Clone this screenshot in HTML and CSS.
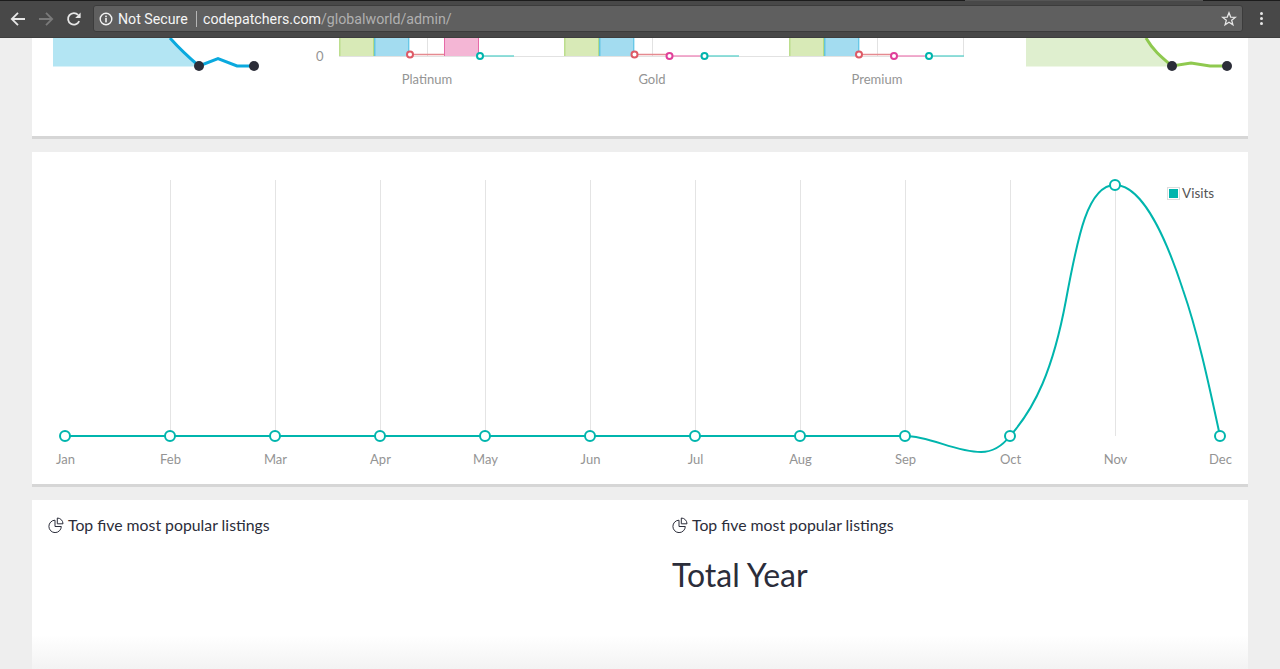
FILE: index.html
```html
<!DOCTYPE html>
<html lang="en">
<head>
    <meta charset="UTF-8">
    <title>Admin dashboard</title>
    <link rel="stylesheet" href="styles.css">
</head>
<body>
    <header class="toolbar">
        <svg class="nav-icon" viewBox="0 0 16 16"><path d="M15 8H2M8 1.800L1.800 8L8 14.200" fill="none" stroke="#e6e6e6" stroke-width="1.8"/></svg>
        <svg class="nav-icon" viewBox="0 0 16 16"><path d="M1 8H14M8 1.800L14.200 8L8 14.200" fill="none" stroke="#7a7a7a" stroke-width="1.8"/></svg>
        <svg class="nav-icon" viewBox="0 0 16 16"><path d="M13.200 10.200A5.800 5.800 0 1 1 12.200 4" fill="none" stroke="#e6e6e6" stroke-width="1.8"/><path d="M14.600 1.600V7H9.200Z" fill="#e6e6e6"/></svg>
        <div class="omnibox">
            <svg class="info-icon" viewBox="0 0 14 14"><circle cx="7" cy="7" r="5.8" fill="none" stroke="#f2f2f2" stroke-width="1.4"/><rect x="6.200" y="6" width="1.600" height="4.400" fill="#f2f2f2"/><rect x="6.200" y="3.600" width="1.600" height="1.600" fill="#f2f2f2"/></svg>
            <span class="secure">Not Secure</span>
            <span class="divider"></span>
            <span class="url">codepatchers.com<span class="url-path">/globalworld/admin/</span></span>
            <svg class="star-icon" viewBox="0 0 16 16"><path d="M8 1.800L9.700 6.100L14.300 6.400L10.700 9.300L11.900 13.800L8 11.300L4.100 13.800L5.300 9.300L1.700 6.400L6.300 6.100Z" fill="none" stroke="#e6e6e6" stroke-width="1.3"/></svg>
        </div>
        <div class="menu-dots"><i></i><i></i><i></i></div>
    </header>

    <main class="page">
        <section class="card card-stats">
            <svg class="chart" viewBox="32 38 1216 98">
                <!-- left sparkline -->
                <path d="M53 38H170L199 66.500H53Z" fill="#b3e5f3"/>
                <path d="M170 38C178 47 186 55 199 66L218 58.500L237 66H254" fill="none" stroke="#0aa9de" stroke-width="3"/>
                <circle cx="199" cy="66" r="5" fill="#2b2d38"/>
                <circle cx="254" cy="66" r="5" fill="#2b2d38"/>

                <!-- bar chart grid -->
                <path d="M427.500 38V56M652.500 38V56M877.500 38V56M963.500 38V56" stroke="#e2e2e2"/>
                <path d="M339 56.500H964" stroke="#e2e2e2"/>
                <text class="axis" x="316" y="61">0</text>

                <!-- Platinum -->
                <rect class="bar-green" x="339.500" y="38" width="34.500" height="18"/>
                <rect class="bar-blue" x="374.500" y="38" width="34" height="18"/>
                <path class="edge-green" d="M339.800 38V56M373.800 38V56"/>
                <path class="edge-blue" d="M374.800 38V56M408.800 38V56"/>
                <rect class="bar-pink" x="444.500" y="38" width="34" height="18"/>
                <path class="edge-pink" d="M444.500 38V56M478.500 38V56"/>
                <path class="line-red" d="M410 54.500H444"/>
                <path class="line-teal" d="M480 56H514"/>
                <circle class="dot-red" cx="410" cy="54.500" r="3"/>
                <circle class="dot-teal" cx="480" cy="56" r="3"/>
                <text class="axis" x="427" y="84" text-anchor="middle">Platinum</text>

                <!-- Gold -->
                <rect class="bar-green" x="564.500" y="38" width="34.500" height="18"/>
                <rect class="bar-blue" x="599.500" y="38" width="34" height="18"/>
                <path class="edge-green" d="M564.800 38V56M598.800 38V56"/>
                <path class="edge-blue" d="M599.800 38V56M633.800 38V56"/>
                <path class="line-red" d="M635 54.500H669"/>
                <path class="line-pink" d="M670 56H704"/>
                <path class="line-teal" d="M705 56H739"/>
                <circle class="dot-red" cx="634.500" cy="54.500" r="3"/>
                <circle class="dot-pink" cx="669.500" cy="56" r="3"/>
                <circle class="dot-teal" cx="704.500" cy="56" r="3"/>
                <text class="axis" x="652" y="84" text-anchor="middle">Gold</text>

                <!-- Premium -->
                <rect class="bar-green" x="789.500" y="38" width="34.500" height="18"/>
                <rect class="bar-blue" x="824.500" y="38" width="34" height="18"/>
                <path class="edge-green" d="M789.800 38V56M823.800 38V56"/>
                <path class="edge-blue" d="M824.800 38V56M858.800 38V56"/>
                <path class="line-red" d="M859 54.500H894"/>
                <path class="line-pink" d="M894 56H929"/>
                <path class="line-teal" d="M929 56H964"/>
                <circle class="dot-red" cx="859" cy="54.500" r="3"/>
                <circle class="dot-pink" cx="894" cy="56" r="3"/>
                <circle class="dot-teal" cx="929" cy="56" r="3"/>
                <text class="axis" x="877" y="84" text-anchor="middle">Premium</text>

                <!-- right sparkline -->
                <path d="M1026 38H1146C1153 50 1160 56 1172 66.500H1026Z" fill="#dfefcf"/>
                <path d="M1146 38C1153 50 1160 56 1172 66L1191 63L1210 66H1227" fill="none" stroke="#8fc94f" stroke-width="3"/>
                <circle cx="1172" cy="66" r="5" fill="#2b2d38"/>
                <circle cx="1227" cy="66" r="5" fill="#2b2d38"/>
            </svg>
        </section>

        <section class="card card-visits">
            <svg class="chart" viewBox="32 152 1216 332">
                <path d="M170.500 180V436M275.500 180V436M380.500 180V436M485.500 180V436M590.500 180V436M695.500 180V436M800.500 180V436M905.500 180V436M1010.500 180V436M1115.500 180V436" stroke="#e4e4e4"/>
                <path d="M65 436H905C930 436 955 452 981 452C994 452 1003 445 1010 436C1035 408 1053 370 1066 300C1078 235 1088 185 1115 185C1145 185 1170 250 1183 290C1197 330 1208 380 1220 436" fill="none" stroke="#00b5ad" stroke-width="2"/>
                <g class="points">
                    <circle cx="65" cy="436" r="5"/><circle cx="170" cy="436" r="5"/><circle cx="275" cy="436" r="5"/>
                    <circle cx="380" cy="436" r="5"/><circle cx="485" cy="436" r="5"/><circle cx="590" cy="436" r="5"/>
                    <circle cx="695" cy="436" r="5"/><circle cx="800" cy="436" r="5"/><circle cx="905" cy="436" r="5"/>
                    <circle cx="1010" cy="436" r="5"/><circle cx="1115" cy="185" r="5"/><circle cx="1220" cy="436" r="5"/>
                </g>
                <g class="axis" text-anchor="middle">
                    <text x="65.500" y="464">Jan</text><text x="170.500" y="464">Feb</text><text x="275.500" y="464">Mar</text>
                    <text x="380.500" y="464">Apr</text><text x="485.500" y="464">May</text><text x="590.500" y="464">Jun</text>
                    <text x="695.500" y="464">Jul</text><text x="800.500" y="464">Aug</text><text x="905.500" y="464">Sep</text>
                    <text x="1010.500" y="464">Oct</text><text x="1115.500" y="464">Nov</text><text x="1220.500" y="464">Dec</text>
                </g>
                <rect x="1167.500" y="187.500" width="12" height="12" fill="#fff" stroke="#ddd"/>
                <rect x="1169" y="189" width="9" height="9" fill="#00b5ad"/>
                <text class="legend" x="1182" y="198">Visits</text>
            </svg>
        </section>

        <section class="card card-listings">
            <div class="listing">
                <h3 class="listing-title">
                    <svg class="pie-icon" viewBox="0 0 16 16"><path d="M7 3.200A6.200 6.200 0 1 0 13.300 9.500H7Z" fill="none" stroke="#2b2d3a"/><path d="M9.300 1V6.800H15A5.800 5.800 0 0 0 9.300 1Z" fill="none" stroke="#2b2d3a"/></svg>
                    Top five most popular listings
                </h3>
            </div>
            <div class="listing">
                <h3 class="listing-title">
                    <svg class="pie-icon" viewBox="0 0 16 16"><path d="M7 3.200A6.200 6.200 0 1 0 13.300 9.500H7Z" fill="none" stroke="#2b2d3a"/><path d="M9.300 1V6.800H15A5.800 5.800 0 0 0 9.300 1Z" fill="none" stroke="#2b2d3a"/></svg>
                    Top five most popular listings
                </h3>
                <h2 class="listing-total">Total Year</h2>
            </div>
        </section>
    </main>
</body>
</html>
```
FILE: styles.css
```css
html, body {
    height: 100%;
}
body {
    margin: 0;
    height: 669px;
    overflow: hidden;
    display: flex;
    flex-direction: column;
    background-color: #eeeeee;
    font-family: Lato, "Open Sans", sans-serif;
    color: #2b2d3a;
}

/* browser bar */
.toolbar {
    height: 38px;
    flex: none;
    box-sizing: border-box;
    display: flex;
    align-items: center;
    padding-left: 10px;
    background: linear-gradient(to right, #1c1c1c 965px, #555 965px, #555 1203px, #1c1c1c 1203px) no-repeat top / 100% 1px, #484848;
    border-bottom: 1px solid #3e3e3e;
}
.nav-icon {
    width: 16px;
    height: 16px;
    margin-right: 12px;
}
.omnibox {
    flex: 1;
    height: 27px;
    margin-left: -1px;
    box-sizing: border-box;
    display: flex;
    align-items: center;
    padding: 0 5px;
    background-color: #5f5f5f;
    border: 1px solid #3c3c3c;
    border-radius: 3px;
    font-family: Roboto, sans-serif;
    font-size: 14.2px;
}
.info-icon {
    width: 14px;
    height: 14px;
    margin-right: 5px;
}
.secure {
    width: 72px;
    color: #f5f5f5;
    white-space: nowrap;
}
.divider {
    width: 1px;
    height: 16px;
    margin: 0 6px;
    background-color: #b5b5b5;
}
.url {
    flex: 1;
    color: #f5f5f5;
}
.url-path {
    color: #b0b0b0;
}
.star-icon {
    width: 16px;
    height: 16px;
}
.menu-dots {
    width: 37px;
    display: flex;
    flex-direction: column;
    align-items: center;
    gap: 2px;
}
.menu-dots i {
    width: 3px;
    height: 3px;
    border-radius: 50%;
    background-color: #e6e6e6;
}

/* cards */
.page {
    flex: 1;
    display: flex;
    flex-direction: column;
    gap: 13px;
    padding: 0 32px;
    min-height: 0;
}
.card {
    background-color: #fff;
    border-bottom: 3px solid #d6d6d6;
}
.chart {
    display: block;
    width: 100%;
    height: 100%;
}
.card-stats {
    height: 98px;
}
.card-visits {
    height: 332px;
}
.card-listings {
    flex: 1;
    border-bottom: none;
    display: grid;
    grid-template-columns: 624px 1fr;
    padding: 15px 16px 0;
    background: linear-gradient(to bottom, #fff 0, #fff 135px, #f3f3f3 169px);
}

/* chart parts */
.axis {
    fill: #949494;
    font-family: Lato, sans-serif;
    font-size: 13px;
}
.legend {
    fill: #555;
    font-family: Lato, sans-serif;
    font-size: 13.5px;
}
.points circle {
    fill: #fff;
    stroke: #00b5ad;
    stroke-width: 2;
}
.bar-green { fill: #d8eab7; }
.bar-blue { fill: #a3dcf0; }
.bar-pink { fill: #f4b6d5; }
.edge-green { stroke: #a9d46e; stroke-width: 1; }
.edge-blue { stroke: #3cb8e0; stroke-width: 1; }
.edge-pink { stroke: #e66aa8; stroke-width: 1; }
.line-red { stroke: #e58a90; stroke-width: 1.5; fill: none; }
.line-pink { stroke: #ef93c0; stroke-width: 1.5; fill: none; }
.line-teal { stroke: #6ed6d0; stroke-width: 1.5; fill: none; }
.dot-red, .dot-pink, .dot-teal {
    fill: #fff;
    stroke-width: 2;
}
.dot-red { stroke: #de5a66; }
.dot-pink { stroke: #e0409a; }
.dot-teal { stroke: #00b5ad; }

/* listings */
.listing-title {
    display: flex;
    align-items: center;
    gap: 4px;
    margin: 0;
    font-size: 15.8px;
    font-weight: 400;
    line-height: 20px;
}
.pie-icon {
    width: 16px;
    height: 16px;
}
.listing-total {
    margin: 20px 0 0;
    font-size: 32px;
    font-weight: 400;
    line-height: 40px;
}
```
